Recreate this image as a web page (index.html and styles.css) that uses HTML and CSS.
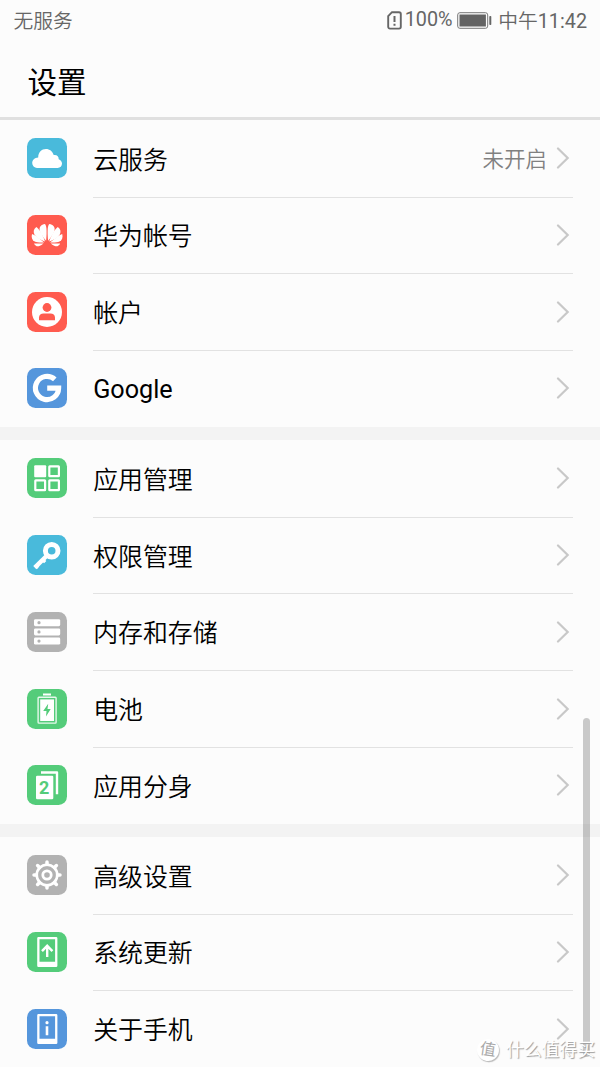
FILE: index.html
```html
<!DOCTYPE html>
<html lang="zh-CN">
<head>
<meta charset="utf-8">
<title>设置</title>
<link rel="stylesheet" href="styles.css">
</head>
<body>
<div class="screen">
  <header class="header">
    <div class="status">
      <span class="carrier">无服务</span>
      <span class="indicators">
        <svg class="sim" viewBox="0 0 15 19"><path d="M1.2 5.2 5 1.2h7a1.8 1.8 0 0 1 1.8 1.8v12.8a1.8 1.8 0 0 1-1.8 1.8H3a1.8 1.8 0 0 1-1.8-1.8z" fill="none" stroke="#666" stroke-width="1.9"/><path d="M7.5 5v6M7.5 12.8v2" stroke="#666" stroke-width="2"/></svg>
        <span class="percent">100%</span>
        <svg class="battery" viewBox="0 0 35 17"><rect x=".7" y=".7" width="30" height="15.6" rx="2.2" fill="none" stroke="#777" stroke-width="1"/><rect x="2.5" y="2.5" width="26.4" height="12" fill="#636363"/><rect x="32.3" y="4" width="2" height="9" rx=".8" fill="#666"/></svg>
        <span class="clock">中午<span class="digits">11:42</span></span>
      </span>
    </div>
    <h1 class="title">设置</h1>
  </header>
  <main>
    <section class="group">
      <div class="row">
        <svg class="icon cyan" viewBox="0 0 40 40"><path d="M10 30a5 5 0 0 1-4.800-5c0-3 2.400-5.400 6-5.600 0-5 3.400-8.400 7.800-8.400 3.600 0 6.500 2.200 7.700 6 3.300-.5 5.100 1.400 5 4.300 2 .7 3.300 2.300 3.300 4.300 0 2.500-1.800 4.400-4.400 4.400z" fill="#fff"/></svg>
        <div class="cell"><span class="label">云服务</span><span class="value">未开启</span><svg class="chevron" viewBox="0 0 14 22"><path d="m2 1.500 9.700 9.500L2 20.500"/></svg></div>
      </div>
      <div class="row">
        <svg class="icon red" viewBox="0 0 40 40"><defs><g id="petals"><path d="M19.300 25.800C20 19 20.200 10.200 18 9c-3.500.4-5.600 2.700-5.200 6 .4 3 3.800 7.600 6.500 10.800z"/><path d="M18.200 26.600C16 20 12.500 14 9.600 12.100c-2.600 1.800-3.400 4.700-2 7.300 1.700 3 6.700 5.600 10.600 7.200z"/><path d="M17.300 27.500C13 23.700 8.500 20.300 5.200 19c-.9 3.200 0 6.200 2.700 7.600 2.300 1 6 1.100 9.400.9z"/><path d="M16.700 28.400H7.200c1.100 2.300 3.200 3.400 5.400 2.600 1.500-.6 2.800-1.700 4.100-2.600z"/></g></defs><g fill="#fff"><use href="#petals" x="-.2"/><use href="#petals" transform="matrix(-1 0 0 1 40.400 0)"/></g></svg>
        <div class="cell"><span class="label">华为帐号</span><svg class="chevron" viewBox="0 0 14 22"><path d="m2 1.500 9.700 9.500L2 20.500"/></svg></div>
      </div>
      <div class="row">
        <svg class="icon red" viewBox="0 0 40 40"><circle cx="20" cy="20" r="15" fill="#fff"/><circle cx="20" cy="15.500" r="4.400" fill="#ff5b4f"/><path d="M12 28.200v-2.700c0-2.500 2-4 4.500-4h7c2.500 0 4.500 1.500 4.500 4v2.700z" fill="#ff5b4f"/></svg>
        <div class="cell"><span class="label">帐户</span><svg class="chevron" viewBox="0 0 14 22"><path d="m2 1.500 9.700 9.500L2 20.500"/></svg></div>
      </div>
      <div class="row">
        <svg class="icon blue" viewBox="0 0 40 40"><path d="M27.800 11.400A11.600 11.600 0 1 0 31.600 20.200H20.200" fill="none" stroke="#fff" stroke-width="5.200"/></svg>
        <div class="cell last"><span class="label latin">Google</span><svg class="chevron" viewBox="0 0 14 22"><path d="m2 1.500 9.700 9.500L2 20.500"/></svg></div>
      </div>
    </section>
    <section class="group">
      <div class="row">
        <svg class="icon green" viewBox="0 0 40 40"><rect x="7.200" y="7.200" width="12" height="12" rx="1" fill="#fff"/><g fill="none" stroke="#fff" stroke-width="2.200"><rect x="22.300" y="8.300" width="9.600" height="9.800" rx=".4"/><rect x="8.300" y="22.300" width="9.800" height="9.800" rx=".4"/><rect x="22.300" y="22.300" width="9.600" height="9.800" rx=".4"/></g></svg>
        <div class="cell"><span class="label">应用管理</span><svg class="chevron" viewBox="0 0 14 22"><path d="m2 1.500 9.700 9.500L2 20.500"/></svg></div>
      </div>
      <div class="row">
        <svg class="icon cyan" viewBox="0 0 40 40"><g fill="none" stroke="#fff"><circle cx="24.700" cy="15.700" r="6.300" stroke-width="5"/><path d="m19.800 20.800-12 11.800" stroke-width="4.400"/><path d="m15.500 24.500 2.700 2.700M9 30.700l2.200 2" stroke-width="3.200"/></g></svg>
        <div class="cell"><span class="label">权限管理</span><svg class="chevron" viewBox="0 0 14 22"><path d="m2 1.500 9.700 9.500L2 20.500"/></svg></div>
      </div>
      <div class="row">
        <svg class="icon gray" viewBox="0 0 40 40"><g fill="#fff"><rect x="7" y="7.200" width="26.200" height="7" rx="1.400"/><rect x="7" y="16.400" width="26.200" height="7" rx="1.400"/><rect x="7" y="25.600" width="26.200" height="7" rx="1.400"/></g><g fill="#b2b2b2"><circle cx="12" cy="10.700" r="1.600"/><circle cx="12" cy="19.900" r="1.600"/><circle cx="12" cy="29.100" r="1.600"/></g></svg>
        <div class="cell"><span class="label">内存和存储</span><svg class="chevron" viewBox="0 0 14 22"><path d="m2 1.500 9.700 9.500L2 20.500"/></svg></div>
      </div>
      <div class="row">
        <svg class="icon green" viewBox="0 0 40 40"><path d="M16 5.500h8" stroke="#fff" stroke-width="1.800"/><rect x="11.100" y="8.300" width="18" height="25.800" rx=".8" fill="none" stroke="#e6f8ec" stroke-width="1.400"/><rect x="13.200" y="10.400" width="13.800" height="21.600" fill="#fff"/><path d="m21.200 14.800-5 7.300h3.300l-.5 5.300 4.700-7.400h-3.200z" fill="#54cc7a"/></svg>
        <div class="cell"><span class="label">电池</span><svg class="chevron" viewBox="0 0 14 22"><path d="m2 1.500 9.700 9.500L2 20.500"/></svg></div>
      </div>
      <div class="row">
        <svg class="icon green" viewBox="0 0 40 40"><rect x="9" y="10.800" width="17.300" height="23.500" rx="1.200" fill="#fff"/><path d="M14 7.500h16v21.800" fill="none" stroke="#fff" stroke-width="2.400" stroke-linejoin="round"/><text class="clone-number" x="17.200" y="28.800" text-anchor="middle" fill="#54cc7a">2</text></svg>
        <div class="cell last"><span class="label">应用分身</span><svg class="chevron" viewBox="0 0 14 22"><path d="m2 1.500 9.700 9.500L2 20.500"/></svg></div>
      </div>
    </section>
    <section class="group">
      <div class="row">
        <svg class="icon gray" viewBox="0 0 40 40"><g fill="none" stroke="#fff"><circle cx="20" cy="20" r="10.300" stroke-width="2.600"/><circle cx="20" cy="20" r="4.200" stroke-width="2.800"/><path d="M20 9.500V7M20 33v-2.500M9.500 20H7M33 20h-2.500M12.600 12.600l-2-2M29.400 29.400l-2-2M12.600 27.400l-2 2M29.400 10.600l-2 2" stroke-width="3.500" stroke-linecap="round"/></g></svg>
        <div class="cell"><span class="label">高级设置</span><svg class="chevron" viewBox="0 0 14 22"><path d="m2 1.500 9.700 9.500L2 20.500"/></svg></div>
      </div>
      <div class="row">
        <svg class="icon green" viewBox="0 0 40 40"><path fill="#fff" fill-rule="evenodd" d="M11.500 5h17.600a1.300 1.300 0 0 1 1.300 1.300v27.400a1.300 1.300 0 0 1-1.300 1.300H11.500a1.300 1.300 0 0 1-1.300-1.300V6.300A1.300 1.300 0 0 1 11.500 5zm1 2.300v22.500h15.600V7.300z"/><path d="M20.200 25V14m-5.200 5.200 5.200-5.400 5.200 5.400" fill="none" stroke="#fff" stroke-width="2.400"/></svg>
        <div class="cell"><span class="label">系统更新</span><svg class="chevron" viewBox="0 0 14 22"><path d="m2 1.500 9.700 9.500L2 20.500"/></svg></div>
      </div>
      <div class="row">
        <svg class="icon blue" viewBox="0 0 40 40"><path fill="#fff" fill-rule="evenodd" d="M11.500 5h17.600a1.300 1.300 0 0 1 1.300 1.300v27.400a1.300 1.300 0 0 1-1.300 1.300H11.500a1.300 1.300 0 0 1-1.300-1.300V6.300A1.300 1.300 0 0 1 11.500 5zm1 2.300v22.500h15.600V7.300z"/><circle cx="20" cy="13.700" r="1.600" fill="#fff"/><path d="M20 17.300v9" stroke="#fff" stroke-width="2.600"/></svg>
        <div class="cell last"><span class="label">关于手机</span><svg class="chevron" viewBox="0 0 14 22"><path d="m2 1.500 9.700 9.500L2 20.500"/></svg></div>
      </div>
    </section>
  </main>
  <div class="scrollbar"></div>
  <div class="watermark"><span class="badge">值</span><span>什么值得买</span></div>
</div>
</body>
</html>
```
FILE: styles.css
```css
* { box-sizing: border-box; }
body {
  margin: 0;
  background: #fcfcfc;
  color: #000;
  font-family: Roboto, "Noto Sans CJK SC", sans-serif;
}
svg { display: block; flex: none; }
.screen {
  position: relative;
  width: 600px;
  height: 1067px;
  overflow: hidden;
}
.header {
  height: 120px;
  border-bottom: 3px solid #e0e0e0;
}
.status {
  display: flex;
  justify-content: space-between;
  align-items: center;
  height: 40px;
  padding: 0 13px 0 13.500px;
  color: #666;
  font-size: 19.800px;
  font-weight: 350;
  line-height: 40px;
}
.carrier, .clock { padding-top: 3px; }
.indicators { display: flex; align-items: center; }
.sim { width: 15px; height: 19px; margin-right: 2.500px; }
.percent {
  width: 47.500px;
  margin-right: 5px;
  font-size: 19.800px;
  font-weight: 400;
  white-space: nowrap;
}
.digits { font-weight: 400; }
.battery { width: 35px; height: 17px; margin-right: 6px; }
.title {
  margin: 0;
  padding: 2px 0 0 27.500px;
  font-size: 29.500px;
  font-weight: 400;
  line-height: 82px;
}
.group { padding-top: .4px; }
.group + .group { border-top: 13px solid #f3f3f3; }
.row {
  display: flex;
  align-items: center;
  height: 76.700px;
  padding: 0 27px 0 26.700px;
}
.icon {
  width: 40px;
  height: 40px;
  margin: 0 26.500px .8px 0;
  border-radius: 8.500px;
}
.cyan { background: #49badb; }
.red { background: #ff5b4f; }
.blue { background: #5596dc; }
.green { background: #54cc7a; }
.gray { background: #b2b2b2; }
.cell {
  display: flex;
  flex: 1;
  align-items: center;
  height: calc(100% + 1px);
  padding-top: 1px;
  border-bottom: 1px solid #e2e2e2;
}
.cell.last { border-bottom-color: transparent; }
.label {
  flex: 1;
  padding-top: 4px;
  font-size: 24.900px;
  font-weight: 350;
  line-height: 36px;
}
.latin { padding-top: 2px; font-size: 25.200px; font-weight: 400; }
.value {
  padding-top: 3px;
  margin-right: 9px;
  color: #808080;
  font-size: 21.500px;
  font-weight: 350;
  line-height: 30px;
}
.chevron {
  width: 14px;
  height: 22px;
  margin: 0 3px .8px 0;
}
.chevron path { fill: none; stroke: #c8c8c8; stroke-width: 2.200; stroke-linecap: round; }
.clone-number { font: 700 18px Roboto, sans-serif; }
.scrollbar {
  position: absolute;
  top: 718px;
  left: 583px;
  width: 7px;
  height: 339px;
  border-radius: 4px;
  background: rgba(0, 0, 0, .2);
}
.watermark {
  position: absolute;
  left: 477px;
  top: 1038px;
  display: flex;
  align-items: center;
  gap: 7px;
  height: 24px;
  color: #fff;
  font-size: 17.800px;
  line-height: 24px;
  white-space: nowrap;
  text-shadow: 1px 1px 1px #999;
}
.badge {
  width: 22px;
  height: 22px;
  border-radius: 50%;
  background: #fff;
  box-shadow: 1px 1px 1px #bbb;
  color: #aaa;
  font-size: 16px;
  line-height: 22px;
  text-align: center;
  text-shadow: none;
  transform: rotate(8deg);
}
```
